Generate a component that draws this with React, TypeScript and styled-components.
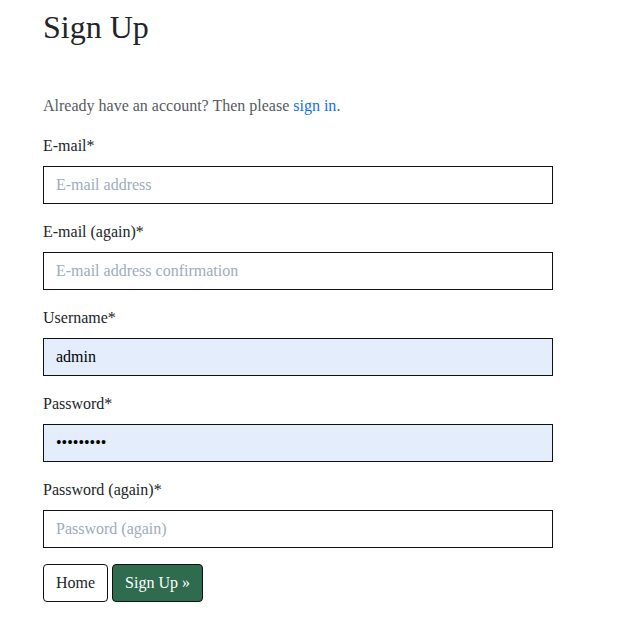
import React from "react";
import styled, { createGlobalStyle } from "styled-components";

const Global = createGlobalStyle`
  html, body { margin: 0; padding: 0; background: #fff; }
  body { font-family: "Liberation Serif", "Times New Roman", serif; color: #212529; }
`;

const Page = styled.main`
  padding: 8px 0 0 43px;
  width: 510px;
`;

const Title = styled.h1`
  margin: 0 0 48px 0;
  font-size: 32px;
  font-weight: 400;
  line-height: 38px;
  color: #212529;
`;

const Lead = styled.p`
  margin: 0 0 16px 0;
  font-size: 16px;
  line-height: 24px;
  color: #555b61;
`;

const Link = styled.a`
  color: #0d6efd;
  text-decoration: none;
`;

const Field = styled.div`
  display: flex;
  flex-direction: column;
  margin-bottom: 16px;
`;

const Label = styled.label`
  font-size: 16px;
  line-height: 24px;
  margin-bottom: 8px;
  color: #212529;
`;

const Input = styled.input<{ $filled?: boolean }>`
  box-sizing: border-box;
  width: 510px;
  height: 38px;
  margin: 0;
  padding: 0 12px;
  border: 1px solid #111;
  border-radius: 0;
  outline: none;
  font-family: "Liberation Serif", "Times New Roman", serif;
  font-size: 16px;
  color: #000;
  background: ${(p) => (p.$filled ? "#e3edfb" : "#fff")};
  &::placeholder { color: #9eacba; }
`;

const Actions = styled.div`
  display: flex;
  gap: 4px;
`;

const Button = styled.button<{ $primary?: boolean }>`
  box-sizing: border-box;
  height: 38px;
  padding: 0 12px;
  border: 1px solid #111;
  border-radius: 4px;
  font-family: "Liberation Serif", "Times New Roman", serif;
  font-size: 16px;
  background: ${(p) => (p.$primary ? "#2e6b4f" : "#fff")};
  color: ${(p) => (p.$primary ? "#fff" : "#212529")};
  cursor: pointer;
`;

export default function App() {
  return (
    <>
      <Global />
      <Page>
        <Title>Sign Up</Title>
        <Lead>
          Already have an account? Then please <Link href="#">sign in</Link>.
        </Lead>
        <form onSubmit={(e) => e.preventDefault()}>
          <Field>
            <Label>E-mail*</Label>
            <Input type="email" placeholder="E-mail address" />
          </Field>
          <Field>
            <Label>E-mail (again)*</Label>
            <Input type="email" placeholder="E-mail address confirmation" />
          </Field>
          <Field>
            <Label>Username*</Label>
            <Input type="text" defaultValue="admin" $filled />
          </Field>
          <Field>
            <Label>Password*</Label>
            <Input type="password" defaultValue="admin1234" $filled />
          </Field>
          <Field>
            <Label>Password (again)*</Label>
            <Input type="password" placeholder="Password (again)" />
          </Field>
          <Actions>
            <Button type="button">Home</Button>
            <Button type="submit" $primary>Sign Up »</Button>
          </Actions>
        </form>
      </Page>
    </>
  );
}
